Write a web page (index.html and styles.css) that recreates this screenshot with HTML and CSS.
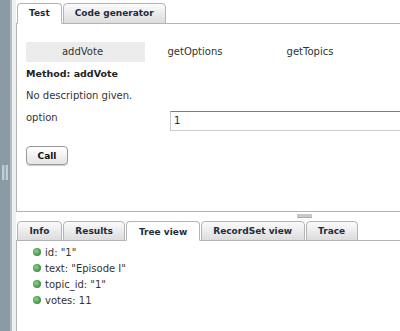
FILE: index.html
```html
<!DOCTYPE html>
<html>
<head>
<meta charset="utf-8">
<link rel="stylesheet" href="styles.css">
</head>
<body>
<div class="app">
  <div class="sidebar"><div class="grip"></div></div>
  <div class="strip"></div>
  <div class="main">
    <div class="top">
      <div class="tabs">
        <div class="tab active">Test</div>
        <div class="tab">Code generator</div>
      </div>
      <div class="panel test-panel">
        <div class="methods">
          <div class="method selected">addVote</div>
          <div class="method m2">getOptions</div>
          <div class="method m3">getTopics</div>
        </div>
        <div class="method-title">Method: addVote</div>
        <div class="desc">No description given.</div>
        <div class="param">
          <span class="param-name">option</span>
          <div class="input">1</div>
        </div>
        <button class="call">Call</button>
      </div>
    </div>
    <div class="splitter"><div class="handle"></div></div>
    <div class="bottom">
      <div class="tabs">
        <div class="tab">Info</div>
        <div class="tab">Results</div>
        <div class="tab active">Tree view</div>
        <div class="tab">RecordSet view</div>
        <div class="tab">Trace</div>
      </div>
      <div class="panel tree">
        <div class="node"><span class="dot"></span>id: "1"</div>
        <div class="node"><span class="dot"></span>text: "Episode I"</div>
        <div class="node"><span class="dot"></span>topic_id: "1"</div>
        <div class="node"><span class="dot"></span>votes: 11</div>
      </div>
    </div>
  </div>
</div>
</body>
</html>
```

FILE: styles.css
```css
html, body {
  margin: 0;
  padding: 0;
  background: #fff;
  overflow: hidden;
}
body {
  width: 400px;
  height: 331px;
  font-family: "DejaVu Sans", Verdana, sans-serif;
  font-size: 10px;
  color: #333;
}
.app {
  display: flex;
  height: 331px;
}
.sidebar {
  width: 10px;
  flex: none;
  background: #8a9ba6;
  display: flex;
  flex-direction: column;
  align-items: center;
}
.grip {
  margin-top: 165px;
  width: 2px;
  height: 15px;
  border-left: 2px solid #c3ccd1;
  border-right: 2px solid #c3ccd1;
  background: #9eacb4;
}
.strip {
  width: 4px;
  flex: none;
  border-left: 2px solid #b3bec5;
  background: #eef0f1;
}
.main {
  flex: 1;
  display: flex;
  flex-direction: column;
  min-width: 0;
}
.top {
  height: 212px;
  display: flex;
  flex-direction: column;
  flex: none;
}
.tabs {
  display: flex;
  gap: 1px;
  padding-left: 1px;
  border-bottom: 1px solid #b4b4b4;
  flex: none;
}
.top .tabs {
  padding-top: 3px;
}
.tab {
  height: 19px;
  line-height: 19px;
  padding: 0 11px;
  margin-bottom: -1px;
  border: 1px solid #b4b4b4;
  border-radius: 4px 4px 0 0;
  background: linear-gradient(#fbfbfb, #dcdcdc);
  font-size: 9px;
  font-weight: bold;
  color: #1d2c3d;
  white-space: nowrap;
}
.tab.active {
  background: #fff;
  border-bottom-color: #fff;
}
.bottom .tab {
  height: 18px;
  line-height: 18px;
  padding: 0 11.5px;
}
.bottom .tab.active {
  line-height: 20px;
}
.panel {
  border-left: 1px solid #b4b4b4;
  background: #fff;
}
.test-panel {
  flex: 1;
  border-bottom: 1px solid #b4b4b4;
  padding: 18px 0 0 9px;
  display: flex;
  flex-direction: column;
  align-items: flex-start;
}
.methods {
  display: grid;
  grid-template-columns: 119px 100px 130px;
  height: 20px;
  line-height: 20px;
}
.method {
  text-align: center;
  color: #333;
}
.method.selected {
  background: #ececec;
  padding-right: 6px;
}
.method-title {
  margin-top: 5px;
  line-height: 14px;
  font-weight: bold;
  font-size: 9.5px;
  color: #222;
}
.desc {
  margin-top: 8px;
  line-height: 14px;
}
.param {
  margin-top: 8px;
  display: flex;
  align-items: flex-start;
  align-self: stretch;
}
.param-name {
  width: 144px;
  flex: none;
  line-height: 14px;
}
.input {
  flex: 1;
  height: 18px;
  line-height: 18px;
  padding-left: 3px;
  border: 1px solid #cccccc;
  border-top-color: #7d7d7d;
  border-right: none;
  color: #1a2a4a;
}
.call {
  margin-top: 15px;
  width: 42px;
  height: 19px;
  padding: 0;
  border: 1px solid #9a9a9a;
  border-radius: 4px;
  background: linear-gradient(#ffffff, #e4e4e4);
  box-shadow: 0 1px 1px rgba(0,0,0,0.2);
  font-family: "DejaVu Sans", Verdana, sans-serif;
  font-size: 9px;
  font-weight: bold;
  color: #111;
}
.splitter {
  height: 9px;
  flex: none;
  display: flex;
  align-items: flex-start;
}
.handle {
  margin: 2px 0 0 281px;
  width: 15px;
  height: 3px;
  background: #c8c8c8;
  border-bottom: 1px solid #b0b0b0;
}
.bottom {
  flex: 1;
  display: flex;
  flex-direction: column;
}
.tree {
  flex: 1;
  padding: 3px 0 0 16px;
}
.node {
  display: flex;
  align-items: center;
  height: 16px;
  color: #333;
}
.dot {
  width: 8px;
  height: 8px;
  border-radius: 50%;
  margin-right: 4px;
  background: radial-gradient(circle at 40% 40%, #8fd08f 0, #4f9c4f 55%, #2f6f35 100%);
}
```
